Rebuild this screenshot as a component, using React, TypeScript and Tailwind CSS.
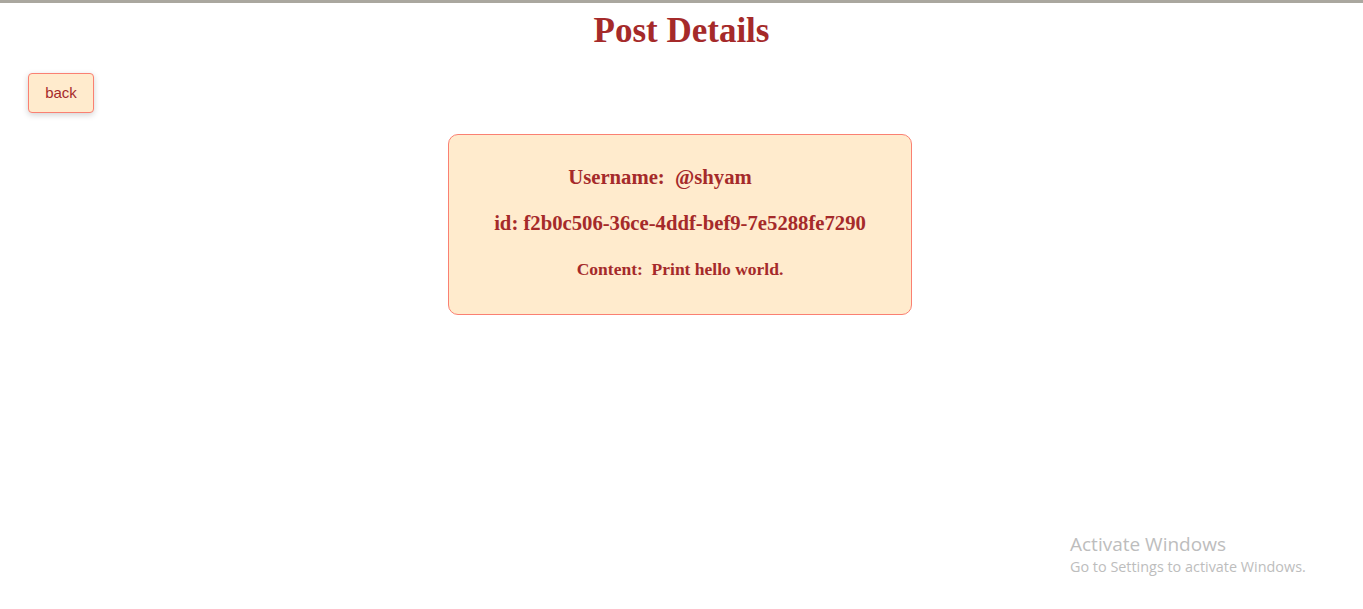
import React from "react";

export default function App() {
  return (
    <div className="relative min-h-[609px] bg-white" style={{ fontFamily: '"Liberation Serif", serif' }}>
      <div className="h-[3px] bg-[#aaa79f]" />
      <h1 className="mt-[8px] text-center text-[35px] font-bold leading-[40px] text-[#a52a2a]">Post Details</h1>
      <div className="mt-[22px] px-[28px]">
        <button
          className="h-[40px] w-[66px] rounded-[4px] border border-[#fa8072] bg-[#ffebcd] text-[15px] text-[#a52a2a] shadow-[0_2px_6px_rgba(0,0,0,0.18)]"
          style={{ fontFamily: '"Liberation Sans", Arial, sans-serif' }}
        >
          back
        </button>
      </div>
      <div className="mt-[21px] flex justify-center">
        <div className="ml-[-3px] flex h-[181px] w-[464px] flex-col items-center rounded-[10px] border border-[#fa8072] bg-[#ffebcd] pt-[30px] font-bold text-[#a52a2a]">
          <div className="pr-[40px] text-[20.7px] leading-[24px]">Username:&nbsp; @shyam</div>
          <div className="mt-[22px] text-[20.7px] leading-[24px]">id: f2b0c506-36ce-4ddf-bef9-7e5288fe7290</div>
          <div className="mt-[24px] text-[17.5px] leading-[20px]">Content:&nbsp; Print hello world.</div>
        </div>
      </div>
      <div
        className="absolute left-[1070px] top-[531px] text-[#bdbdbd]"
        style={{ fontFamily: '"Open Sans", "Noto Sans", sans-serif' }}
      >
        <div className="text-[19px] leading-[26px]">Activate Windows</div>
        <div className="text-[14.4px] leading-[19px]">Go to Settings to activate Windows.</div>
      </div>
    </div>
  );
}
